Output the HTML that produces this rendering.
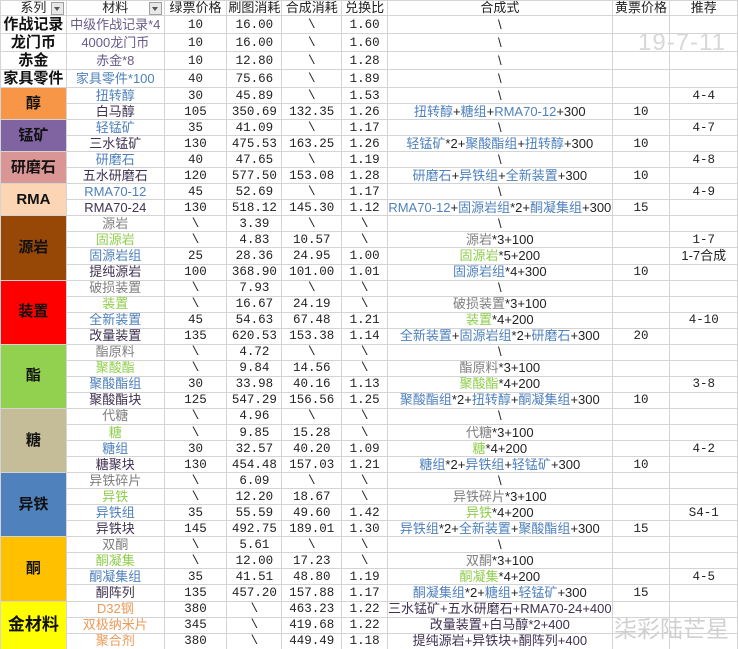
<!DOCTYPE html>
<html><head><meta charset="utf-8">
<style>
html,body{margin:0;padding:0;background:#fff;width:738px;height:649px;overflow:hidden;position:relative}
table{border-collapse:collapse;table-layout:fixed;position:absolute;left:0;top:0;font-family:"Liberation Sans","Noto Sans CJK SC",sans-serif;font-size:13px;color:#222}
td{border:1px solid #d4d4d4;padding:0;text-align:center;white-space:nowrap;overflow:hidden;line-height:14px}
tr{height:16.05px}
tr.h{height:15px}
tr.t{height:18px}
.n{font-family:"Liberation Mono","Noto Sans CJK SC",monospace;font-size:12.5px;color:#222}
.cat{font-weight:bold;font-size:15px;color:#111;border-color:#d4d4d4}
.top{font-weight:bold;font-size:15px;color:#111}
.p{color:#6a5a8a}.g{color:#7f7f7f}.gr{color:#8fce4c}.b{color:#4f81bd}.d{color:#3f3151}.o{color:#eb9a58}
.hd{position:relative}
.dd{position:absolute;right:2px;top:1px;width:11px;height:11px;border:1px solid #a0a0a0;background:#e8e8e8}
.dd:after{content:"";position:absolute;left:2px;top:4px;border-left:3.5px solid transparent;border-right:3.5px solid transparent;border-top:4px solid #555}
.wm{position:absolute;color:#d8d8d8;font-family:"Liberation Sans","Noto Sans CJK SC",sans-serif}
</style></head><body>
<table>
<colgroup><col style="width:66px"><col style="width:98px"><col style="width:63px"><col style="width:55px"><col style="width:60px"><col style="width:46px"><col style="width:224px"><col style="width:58px"><col style="width:68px"></colgroup>
<tr class="h"><td class="hd">系列<span class="dd"></span></td><td class="hd">材料<span class="dd"></span></td><td>绿票价格</td><td>刷图消耗</td><td>合成消耗</td><td>兑换比</td><td>合成式</td><td>黄票价格</td><td>推荐</td></tr>
<tr class="t"><td class="top">作战记录</td><td class="p">中级作战记录*4</td><td class="n">10</td><td class="n">16.00</td><td class="n">\</td><td class="n">1.60</td><td>\</td><td></td><td></td></tr>
<tr class="t"><td class="top">龙门币</td><td class="p">4000龙门币</td><td class="n">10</td><td class="n">16.00</td><td class="n">\</td><td class="n">1.60</td><td>\</td><td></td><td></td></tr>
<tr class="t"><td class="top">赤金</td><td class="p">赤金*8</td><td class="n">10</td><td class="n">12.80</td><td class="n">\</td><td class="n">1.28</td><td>\</td><td></td><td></td></tr>
<tr class="t"><td class="top">家具零件</td><td class="b">家具零件*100</td><td class="n">40</td><td class="n">75.66</td><td class="n">\</td><td class="n">1.89</td><td>\</td><td></td><td></td></tr>

<tr><td class="cat" rowspan="2" style="background:#f79646">醇</td><td class="b">扭转醇</td><td class="n">30</td><td class="n">45.89</td><td class="n">\</td><td class="n">1.53</td><td>\</td><td></td><td class="n">4-4</td></tr>
<tr><td class="d">白马醇</td><td class="n">105</td><td class="n">350.69</td><td class="n">132.35</td><td class="n">1.26</td><td><span class="b">扭转醇</span>+<span class="b">糖组</span>+<span class="b">RMA70-12</span>+300</td><td class="n">10</td><td></td></tr>
<tr><td class="cat" rowspan="2" style="background:#8064a2">锰矿</td><td class="b">轻锰矿</td><td class="n">35</td><td class="n">41.09</td><td class="n">\</td><td class="n">1.17</td><td>\</td><td></td><td class="n">4-7</td></tr>
<tr><td class="d">三水锰矿</td><td class="n">130</td><td class="n">475.53</td><td class="n">163.25</td><td class="n">1.26</td><td><span class="b">轻锰矿</span>*2+<span class="b">聚酸酯组</span>+<span class="b">扭转醇</span>+300</td><td class="n">10</td><td></td></tr>
<tr><td class="cat" rowspan="2" style="background:#da9694">研磨石</td><td class="b">研磨石</td><td class="n">40</td><td class="n">47.65</td><td class="n">\</td><td class="n">1.19</td><td>\</td><td></td><td class="n">4-8</td></tr>
<tr><td class="d">五水研磨石</td><td class="n">120</td><td class="n">577.50</td><td class="n">153.08</td><td class="n">1.28</td><td><span class="b">研磨石</span>+<span class="b">异铁组</span>+<span class="b">全新装置</span>+300</td><td class="n">10</td><td></td></tr>
<tr><td class="cat" rowspan="2" style="background:#fcd5b4">RMA</td><td class="b">RMA70-12</td><td class="n">45</td><td class="n">52.69</td><td class="n">\</td><td class="n">1.17</td><td>\</td><td></td><td class="n">4-9</td></tr>
<tr><td class="d">RMA70-24</td><td class="n">130</td><td class="n">518.12</td><td class="n">145.30</td><td class="n">1.12</td><td><span class="b">RMA70-12</span>+<span class="b">固源岩组</span>*2+<span class="b">酮凝集组</span>+300</td><td class="n">15</td><td></td></tr>

<tr><td class="cat" rowspan="4" style="background:#974706">源岩</td><td class="g">源岩</td><td class="n">\</td><td class="n">3.39</td><td class="n">\</td><td class="n">\</td><td>\</td><td></td><td></td></tr>
<tr><td class="gr">固源岩</td><td class="n">\</td><td class="n">4.83</td><td class="n">10.57</td><td class="n">\</td><td><span class="g">源岩</span>*3+100</td><td></td><td class="n">1-7</td></tr>
<tr><td class="b">固源岩组</td><td class="n">25</td><td class="n">28.36</td><td class="n">24.95</td><td class="n">1.00</td><td><span class="gr">固源岩</span>*5+200</td><td></td><td>1-7合成</td></tr>
<tr><td class="d">提纯源岩</td><td class="n">100</td><td class="n">368.90</td><td class="n">101.00</td><td class="n">1.01</td><td><span class="b">固源岩组</span>*4+300</td><td class="n">10</td><td></td></tr>

<tr><td class="cat" rowspan="4" style="background:#ff0000">装置</td><td class="g">破损装置</td><td class="n">\</td><td class="n">7.93</td><td class="n">\</td><td class="n">\</td><td>\</td><td></td><td></td></tr>
<tr><td class="gr">装置</td><td class="n">\</td><td class="n">16.67</td><td class="n">24.19</td><td class="n">\</td><td><span class="g">破损装置</span>*3+100</td><td></td><td></td></tr>
<tr><td class="b">全新装置</td><td class="n">45</td><td class="n">54.63</td><td class="n">67.48</td><td class="n">1.21</td><td><span class="gr">装置</span>*4+200</td><td></td><td class="n">4-10</td></tr>
<tr><td class="d">改量装置</td><td class="n">135</td><td class="n">620.53</td><td class="n">153.38</td><td class="n">1.14</td><td><span class="b">全新装置</span>+<span class="b">固源岩组</span>*2+<span class="b">研磨石</span>+300</td><td class="n">20</td><td></td></tr>

<tr><td class="cat" rowspan="4" style="background:#92d050">酯</td><td class="g">酯原料</td><td class="n">\</td><td class="n">4.72</td><td class="n">\</td><td class="n">\</td><td>\</td><td></td><td></td></tr>
<tr><td class="gr">聚酸酯</td><td class="n">\</td><td class="n">9.84</td><td class="n">14.56</td><td class="n">\</td><td><span class="g">酯原料</span>*3+100</td><td></td><td></td></tr>
<tr><td class="b">聚酸酯组</td><td class="n">30</td><td class="n">33.98</td><td class="n">40.16</td><td class="n">1.13</td><td><span class="gr">聚酸酯</span>*4+200</td><td></td><td class="n">3-8</td></tr>
<tr><td class="d">聚酸酯块</td><td class="n">125</td><td class="n">547.29</td><td class="n">156.56</td><td class="n">1.25</td><td><span class="b">聚酸酯组</span>*2+<span class="b">扭转醇</span>+<span class="b">酮凝集组</span>+300</td><td class="n">10</td><td></td></tr>

<tr><td class="cat" rowspan="4" style="background:#c4bd97">糖</td><td class="g">代糖</td><td class="n">\</td><td class="n">4.96</td><td class="n">\</td><td class="n">\</td><td>\</td><td></td><td></td></tr>
<tr><td class="gr">糖</td><td class="n">\</td><td class="n">9.85</td><td class="n">15.28</td><td class="n">\</td><td><span class="g">代糖</span>*3+100</td><td></td><td></td></tr>
<tr><td class="b">糖组</td><td class="n">30</td><td class="n">32.57</td><td class="n">40.20</td><td class="n">1.09</td><td><span class="gr">糖</span>*4+200</td><td></td><td class="n">4-2</td></tr>
<tr><td class="d">糖聚块</td><td class="n">130</td><td class="n">454.48</td><td class="n">157.03</td><td class="n">1.21</td><td><span class="b">糖组</span>*2+<span class="b">异铁组</span>+<span class="b">轻锰矿</span>+300</td><td class="n">10</td><td></td></tr>

<tr><td class="cat" rowspan="4" style="background:#4f81bd">异铁</td><td class="g">异铁碎片</td><td class="n">\</td><td class="n">6.09</td><td class="n">\</td><td class="n">\</td><td>\</td><td></td><td></td></tr>
<tr><td class="gr">异铁</td><td class="n">\</td><td class="n">12.20</td><td class="n">18.67</td><td class="n">\</td><td><span class="g">异铁碎片</span>*3+100</td><td></td><td></td></tr>
<tr><td class="b">异铁组</td><td class="n">35</td><td class="n">55.59</td><td class="n">49.60</td><td class="n">1.42</td><td><span class="gr">异铁</span>*4+200</td><td></td><td class="n">S4-1</td></tr>
<tr><td class="d">异铁块</td><td class="n">145</td><td class="n">492.75</td><td class="n">189.01</td><td class="n">1.30</td><td><span class="b">异铁组</span>*2+<span class="b">全新装置</span>+<span class="b">聚酸酯组</span>+300</td><td class="n">15</td><td></td></tr>

<tr><td class="cat" rowspan="4" style="background:#ffc000">酮</td><td class="g">双酮</td><td class="n">\</td><td class="n">5.61</td><td class="n">\</td><td class="n">\</td><td>\</td><td></td><td></td></tr>
<tr><td class="gr">酮凝集</td><td class="n">\</td><td class="n">12.00</td><td class="n">17.23</td><td class="n">\</td><td><span class="g">双酮</span>*3+100</td><td></td><td></td></tr>
<tr><td class="b">酮凝集组</td><td class="n">35</td><td class="n">41.51</td><td class="n">48.80</td><td class="n">1.19</td><td><span class="gr">酮凝集</span>*4+200</td><td></td><td class="n">4-5</td></tr>
<tr><td class="d">酮阵列</td><td class="n">135</td><td class="n">457.20</td><td class="n">157.88</td><td class="n">1.17</td><td><span class="b">酮凝集组</span>*2+<span class="b">糖组</span>+<span class="b">轻锰矿</span>+300</td><td class="n">15</td><td></td></tr>

<tr><td class="cat" rowspan="3" style="background:#ffff00;font-size:17px">金材料</td><td class="o">D32钢</td><td class="n">380</td><td class="n">\</td><td class="n">463.23</td><td class="n">1.22</td><td class="d">三水锰矿+五水研磨石+RMA70-24+400</td><td></td><td></td></tr>
<tr><td class="o">双极纳米片</td><td class="n">345</td><td class="n">\</td><td class="n">419.68</td><td class="n">1.22</td><td class="d">改量装置+白马醇*2+400</td><td></td><td></td></tr>
<tr><td class="o">聚合剂</td><td class="n">380</td><td class="n">\</td><td class="n">449.49</td><td class="n">1.18</td><td class="d">提纯源岩+异铁块+酮阵列+400</td><td></td><td></td></tr>
</table>
<div class="wm" style="left:638px;top:29px;font-size:24px;letter-spacing:1px">19-7-11</div>
<div class="wm" style="left:614px;top:610px;font-size:23px;color:#d0d0d0">柒彩陆芒星</div>
</body></html>
